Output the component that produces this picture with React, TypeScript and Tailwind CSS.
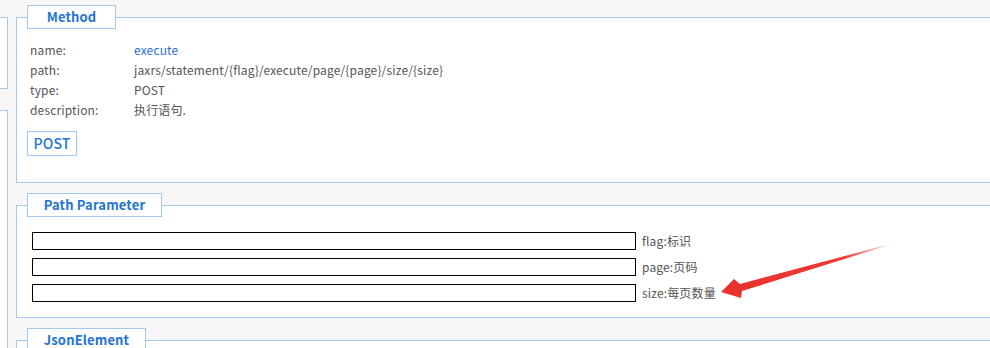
const font = { fontFamily: '"Noto Sans CJK SC", "Noto Sans", sans-serif' };

const rows = [
  { label: "name:", value: "execute", link: true },
  { label: "path:", value: "jaxrs/statement/{flag}/execute/page/{page}/size/{size}" },
  { label: "type:", value: "POST" },
  { label: "description:", value: "执行语句." },
];

const params = ["flag:标识", "page:页码", "size:每页数量"];

const Legend = ({ title, width }: { title: string; width: string }) => (
  <div
    className={`${width} shrink-0 -mt-[13px] ml-[10px] h-[24px] border border-[#a3c9ef] bg-white flex items-center justify-center text-[13px] font-bold text-[#2474d0]`}
  >
    {title}
  </div>
);

export default function App() {
  return (
    <div
      className="relative w-[990px] h-[348px] overflow-hidden bg-[#f7f7f7] flex text-[12px] tracking-[0.15px] text-[#555]"
      style={font}
    >
      {/* left column (cut off) */}
      <div className="w-[8px] shrink-0 flex flex-col pt-[17px]">
        <div className="h-[72px] shrink-0 bg-white border-t border-r border-b border-[#a3c9ef]" />
        <div className="mt-[21px] flex-1 bg-white border-t border-r border-[#a3c9ef]" />
      </div>

      <div className="ml-[8px] flex-1 flex flex-col pt-[17px] gap-[22px]">
        {/* Method */}
        <div className="h-[166px] shrink-0 bg-white border-t border-l border-b border-[#a3c9ef] flex flex-col">
          <Legend title="Method" width="w-[89px]" />
          <div className="mt-[11px] ml-[13px] flex flex-col">
            {rows.map(r => (
              <div key={r.label} className="flex h-[20px] items-center">
                <span className="w-[104px]">{r.label}</span>
                <span className={r.link ? "text-[#2f6fd1]" : ""}>{r.value}</span>
              </div>
            ))}
          </div>
          <div className="mt-[11px] ml-[10px] w-[50px] h-[25px] border border-[#a3c9ef] flex items-center justify-center text-[14px] font-medium text-[#2474d0]">
            POST
          </div>
        </div>

        {/* Path Parameter */}
        <div className="h-[113px] shrink-0 bg-white border-t border-l border-b border-[#a3c9ef] flex flex-col">
          <Legend title="Path Parameter" width="w-[135px]" />
          <div className="mt-[15px] ml-[15px] flex flex-col gap-[8px]">
            {params.map(p => (
              <div key={p} className="flex items-center h-[18px]">
                <input className="w-[604px] h-[18px] border border-black bg-white outline-none" />
                <span className="ml-[6px]">{p}</span>
              </div>
            ))}
          </div>
        </div>

        {/* JsonElement */}
        <div className="flex-1 min-h-0 bg-white border-t border-l border-[#a3c9ef] flex flex-col">
          <Legend title="JsonElement" width="w-[119px]" />
        </div>
      </div>

      {/* annotation arrow */}
      <svg className="absolute left-0 top-0 pointer-events-none" width="990" height="348" viewBox="0 0 990 348">
        <defs>
          <linearGradient id="tail" x1="885" y1="245" x2="721" y2="292" gradientUnits="userSpaceOnUse">
            <stop offset="0" stopColor="#f04a43" stopOpacity="0.2" />
            <stop offset="0.25" stopColor="#ee3b36" />
            <stop offset="1" stopColor="#e8302c" />
          </linearGradient>
        </defs>
        <polygon points="886,245 740,284 734,279 721,292 741,298 742,291 886,246" fill="url(#tail)" />
      </svg>
    </div>
  );
}
